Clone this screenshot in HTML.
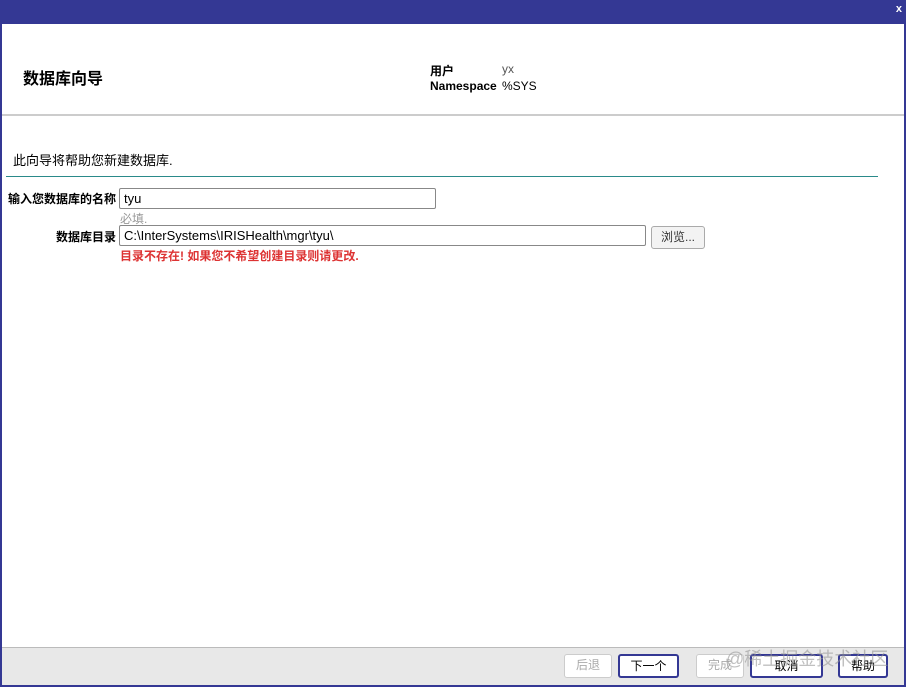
<!DOCTYPE html>
<html><head><meta charset="utf-8"><style>
*{margin:0;padding:0;box-sizing:border-box}
body{width:906px;height:687px;background:#fff;font-family:"Liberation Sans","Noto Sans CJK SC",sans-serif;position:relative;overflow:hidden;font-size:12px;color:#000}
.frame{position:absolute;left:0;top:0;width:906px;height:687px;border:2px solid #343894;border-top:none}
.top{position:absolute;left:0;top:0;width:906px;height:24px;background:#343894}
.x{position:absolute;right:4px;top:3px;color:#fff;font-weight:bold;font-size:11px}
.a{position:absolute;white-space:nowrap}
.inp{position:absolute;border:1px solid #888;border-radius:2px;background:#fff;font-size:13px;padding:1px 4px;height:21px;line-height:18px}
.btn{position:absolute;height:24px;border-radius:3px;font-size:12px;text-align:center;line-height:20px;background:#fff}
</style></head><body>
<div class="top"><span class="x">x</span></div>
<div class="frame"></div>
<div class="a" style="left:23px;top:65px;font-size:16px;font-weight:bold">数据库向导</div>
<div class="a" style="left:430px;top:62px;font-weight:bold;font-size:12px">用户</div>
<div class="a" style="left:502px;top:62px;color:#555;font-size:12px">yx</div>
<div class="a" style="left:430px;top:79px;font-weight:bold;font-size:12px">Namespace</div>
<div class="a" style="left:502px;top:79px;font-size:12px">%SYS</div>
<div style="position:absolute;left:2px;top:114px;width:902px;height:2px;background:#ccc"></div>
<div class="a" style="left:13px;top:150px;font-size:13px">此向导将帮助您新建数据库.</div>
<div style="position:absolute;left:6px;top:176px;width:872px;height:1px;background:#2a8a8a"></div>
<div class="a" style="left:8px;top:190px;font-weight:bold;font-size:12px">输入您数据库的名称</div>
<div class="inp" style="left:119px;top:188px;width:317px">tyu</div>
<div class="a" style="left:120px;top:210px;color:#999;font-size:12px">必填.</div>
<div class="a" style="left:56px;top:228px;font-weight:bold;font-size:12px">数据库目录</div>
<div class="inp" style="left:119px;top:225px;width:527px">C:\InterSystems\IRISHealth\mgr\tyu\</div>
<div class="btn" style="left:651px;top:226px;width:54px;height:23px;border:1px solid #aaa;background:#f3f3f3;color:#333">浏览...</div>
<div class="a" style="left:120px;top:247px;color:#d33;font-weight:bold;font-size:12px">目录不存在! 如果您不希望创建目录则请更改.</div>
<div style="position:absolute;left:2px;top:647px;width:902px;height:38px;background:#e8e8e8;border-top:1px solid #bbb"></div>
<div class="btn" style="left:564px;top:654px;width:48px;border:1px solid #ccc;color:#aaa">后退</div>
<div class="btn" style="left:618px;top:654px;width:61px;border:2px solid #343894;color:#000">下一个</div>
<div class="btn" style="left:696px;top:654px;width:48px;border:1px solid #ccc;color:#aaa">完成</div>
<div class="btn" style="left:750px;top:654px;width:73px;border:2px solid #343894">取消</div>
<div class="btn" style="left:838px;top:654px;width:50px;border:2px solid #343894">帮助</div>
<div class="a" style="left:726px;top:645px;color:rgba(150,150,150,.6);font-size:18px">@稀土掘金技术社区</div>
</body></html>
